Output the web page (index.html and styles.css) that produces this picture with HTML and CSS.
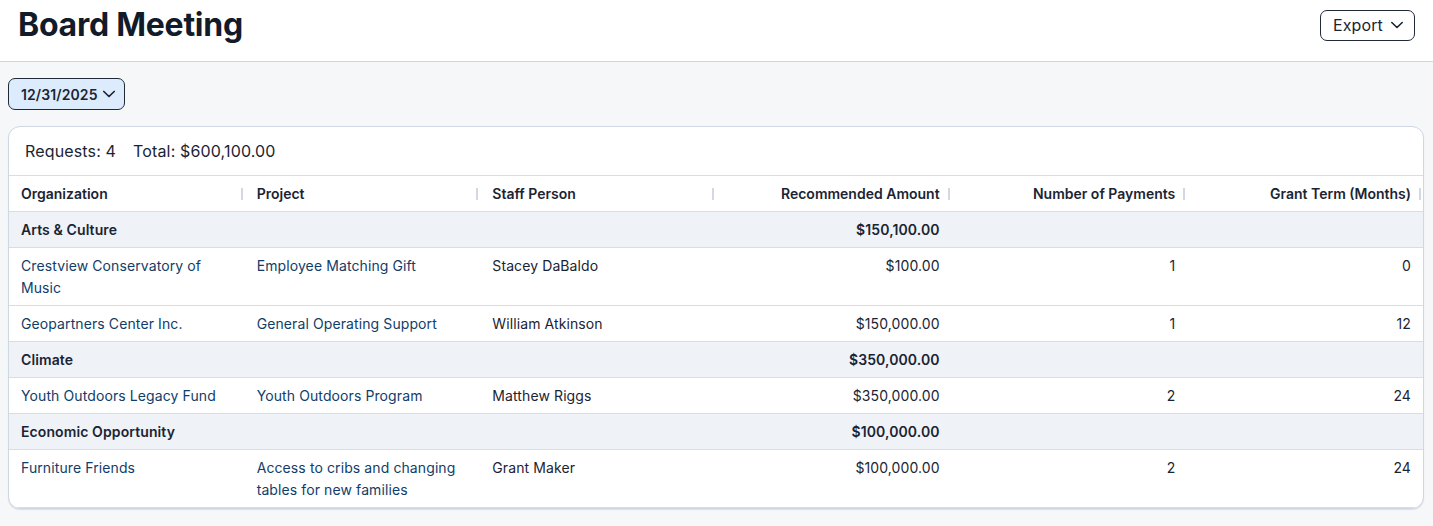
FILE: index.html
```html
<!DOCTYPE html>
<html>
<head>
<meta charset="utf-8">
<title>Board Meeting</title>
<link rel="stylesheet" href="styles.css">
</head>
<body>
<header class="topbar">
  <h1 class="title">Board Meeting</h1>
  <button class="export-btn">Export
    <svg class="chev" width="16" height="16" viewBox="0 0 16 16"><path d="M2.8 5.5 L8 10.5 L13.2 5.5" fill="none" stroke="currentColor" stroke-width="1.6" stroke-linecap="round" stroke-linejoin="round"/></svg>
  </button>
</header>
<main class="content">
  <button class="date-btn">12/31/2025
    <svg class="chev" width="16" height="16" viewBox="0 0 16 16"><path d="M2.8 5.5 L8 10.5 L13.2 5.5" fill="none" stroke="currentColor" stroke-width="1.7" stroke-linecap="round" stroke-linejoin="round"/></svg>
  </button>
  <section class="card">
    <div class="summary"><span>Requests: 4</span><span>Total: $600,100.00</span></div>
    <table class="grid">
      <thead>
        <tr>
          <th>Organization</th>
          <th>Project</th>
          <th>Staff Person</th>
          <th class="num">Recommended Amount</th>
          <th class="num">Number of Payments</th>
          <th class="num">Grant Term (Months)</th>
        </tr>
      </thead>
      <tbody>
        <tr class="group"><td>Arts &amp; Culture</td><td></td><td></td><td class="num">$150,100.00</td><td></td><td></td></tr>
        <tr><td><a class="link">Crestview Conservatory of Music</a></td><td><a class="link">Employee Matching Gift</a></td><td>Stacey DaBaldo</td><td class="num">$100.00</td><td class="num">1</td><td class="num">0</td></tr>
        <tr><td><a class="link">Geopartners Center Inc.</a></td><td><a class="link">General Operating Support</a></td><td>William Atkinson</td><td class="num">$150,000.00</td><td class="num">1</td><td class="num">12</td></tr>
        <tr class="group"><td>Climate</td><td></td><td></td><td class="num">$350,000.00</td><td></td><td></td></tr>
        <tr><td><a class="link">Youth Outdoors Legacy Fund</a></td><td><a class="link">Youth Outdoors Program</a></td><td>Matthew Riggs</td><td class="num">$350,000.00</td><td class="num">2</td><td class="num">24</td></tr>
        <tr class="group"><td>Economic Opportunity</td><td></td><td></td><td class="num">$100,000.00</td><td></td><td></td></tr>
        <tr><td><a class="link">Furniture Friends</a></td><td><a class="link">Access to cribs and changing tables for new families</a></td><td>Grant Maker</td><td class="num">$100,000.00</td><td class="num">2</td><td class="num">24</td></tr>
      </tbody>
    </table>
  </section>
</main>
</body>
</html>
```

FILE: styles.css
```css
* { box-sizing: border-box; }
html, body { margin: 0; padding: 0; }
body {
  font-family: Inter, "Noto Sans", sans-serif;
  color: #1b2433;
  background: #f6f7f9;
  height: 526px;
  overflow: hidden;
}
.topbar {
  height: 62px;
  background: #ffffff;
  border-bottom: 1px solid #ccd5e0;
  display: flex;
  align-items: center;
  justify-content: space-between;
  padding: 0 18px;
}
.title {
  margin: 0;
  font-size: 32px;
  font-weight: 700;
  letter-spacing: -0.25px;
  color: #111b29;
  line-height: 40px;
  margin-top: -12px;
}
.export-btn {
  font-family: inherit;
  font-size: 16px;
  color: #1b2433;
  background: #fff;
  border: 1px solid #1f2937;
  border-radius: 7px;
  height: 31px;
  width: 95px;
  padding: 0 0 0 12px;
  display: flex;
  align-items: center;
  gap: 6px;
  margin-top: -11px;
  letter-spacing: 0.1px;
}
.chev { display: block; }
.content {
  padding: 16px 9px 0 8px;
}
.date-btn {
  font-family: inherit;
  font-size: 14px;
  font-weight: 600;
  color: #1b2433;
  background: #dcecfd;
  border: 1px solid #1f2937;
  border-radius: 7px;
  height: 32px;
  width: 117px;
  padding: 0 0 0 12px;
  display: flex;
  align-items: center;
  gap: 3px;
  letter-spacing: 0.1px;
}
.card {
  margin-top: 16px;
  background: #fff;
  border: 1px solid #cfd7e2;
  border-radius: 12px;
  overflow: hidden;
  box-shadow: 0 1px 1px rgba(30, 50, 80, 0.12);
}
.summary {
  height: 49px;
  display: flex;
  align-items: center;
  gap: 17px;
  padding: 0 16px;
  font-size: 16px;
  letter-spacing: 0.15px;
  border-bottom: 1px solid #d6dde7;
}
.grid {
  width: 100%;
  border-collapse: collapse;
  table-layout: fixed;
  font-size: 14px;
  letter-spacing: 0.1px;
}
.grid th, .grid td {
  padding: 7px 12px 6px 12px;
  line-height: 22px;
  text-align: left;
  vertical-align: top;
  border-bottom: 1px solid #d6dde7;
}
.grid th {
  font-weight: 600;
  position: relative;
  color: #1b2433;
  letter-spacing: 0;
}
.grid th::after {
  content: "";
  position: absolute;
  right: 2px;
  top: 12px;
  width: 2px;
  height: 12px;
  background: #d3d9e2;
}
.grid .num { text-align: right; }
.group td {
  background: #eff3f8;
  font-weight: 600;
}
.link {
  color: #103d69;
  text-decoration: none;
}
```
